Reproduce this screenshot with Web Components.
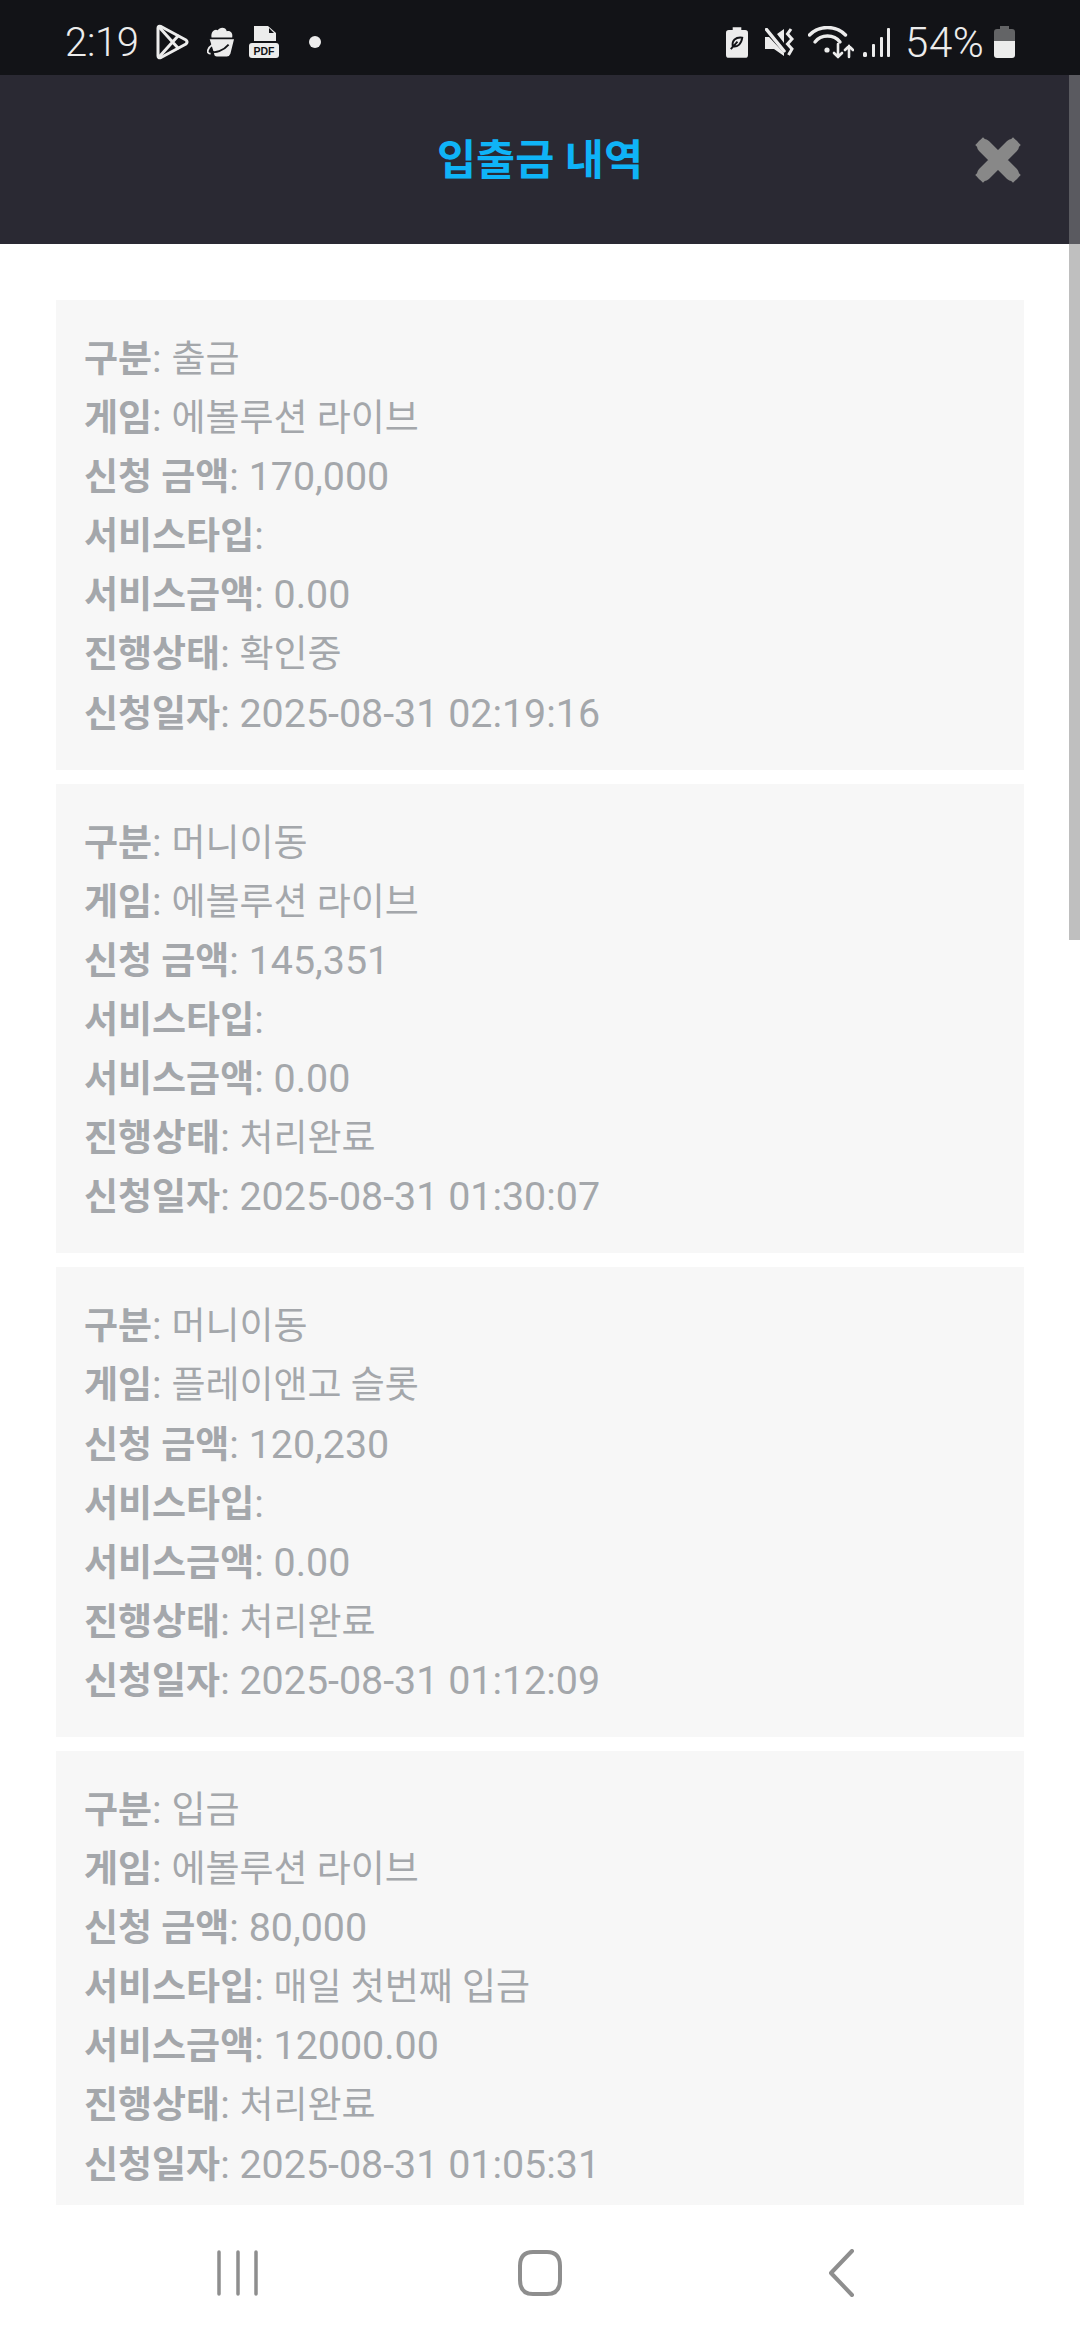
<!DOCTYPE html>
<html lang="ko">
<head>
<meta charset="utf-8">
<title>입출금 내역</title>
<style>
  html, body { margin: 0; padding: 0; background: #fff; }
  body { font-family: Roboto, "Noto Sans CJK KR", sans-serif; }
</style>
</head>
<body>
<app-shell>
  <status-bar slot="top" time="2:19" level="54%"></status-bar>
  <app-header slot="top" heading="입출금 내역"></app-header>

  <record-card>
    <record-row label="구분" ko>출금</record-row>
    <record-row label="게임" ko>에볼루션 라이브</record-row>
    <record-row label="신청 금액">170,000</record-row>
    <record-row label="서비스타입"></record-row>
    <record-row label="서비스금액">0.00</record-row>
    <record-row label="진행상태" ko>확인중</record-row>
    <record-row label="신청일자">2025-08-31 02:19:16</record-row>
  </record-card>
  <record-card>
    <record-row label="구분" ko>머니이동</record-row>
    <record-row label="게임" ko>에볼루션 라이브</record-row>
    <record-row label="신청 금액">145,351</record-row>
    <record-row label="서비스타입"></record-row>
    <record-row label="서비스금액">0.00</record-row>
    <record-row label="진행상태" ko>처리완료</record-row>
    <record-row label="신청일자">2025-08-31 01:30:07</record-row>
  </record-card>
  <record-card>
    <record-row label="구분" ko>머니이동</record-row>
    <record-row label="게임" ko>플레이앤고 슬롯</record-row>
    <record-row label="신청 금액">120,230</record-row>
    <record-row label="서비스타입"></record-row>
    <record-row label="서비스금액">0.00</record-row>
    <record-row label="진행상태" ko>처리완료</record-row>
    <record-row label="신청일자">2025-08-31 01:12:09</record-row>
  </record-card>
  <record-card>
    <record-row label="구분" ko>입금</record-row>
    <record-row label="게임" ko>에볼루션 라이브</record-row>
    <record-row label="신청 금액">80,000</record-row>
    <record-row label="서비스타입" ko>매일 첫번째 입금</record-row>
    <record-row label="서비스금액">12000.00</record-row>
    <record-row label="진행상태" ko>처리완료</record-row>
    <record-row label="신청일자">2025-08-31 01:05:31</record-row>
  </record-card>

  <nav-bar slot="bottom"></nav-bar>
</app-shell>

<script>
class AppShell extends HTMLElement {
  constructor() {
    super();
    this.attachShadow({ mode: "open" });
  }
  connectedCallback() {
    this.shadowRoot.innerHTML = `
      <style>
        :host { display: flex; flex-direction: column; position: relative; width: 1080px; height: 2340px; overflow: hidden; background: #fff; }
        .list { flex: 1; min-height: 0; overflow: hidden; display: flex; flex-direction: column; gap: 14px; padding: 56px 56px 0; }
        .thumb { position: absolute; top: 75px; right: 0; width: 11px; height: 865px; background: #bfbfbf; }
        .thumb::before { content: ""; display: block; height: 169px; background: #5a5a60; }
      </style>
      <slot name="top"></slot>
      <div class="list"><slot></slot></div>
      <slot name="bottom"></slot>
      <div class="thumb"></div>
    `;
  }
}

class StatusBar extends HTMLElement {
  constructor() {
    super();
    this.attachShadow({ mode: "open" });
  }
  connectedCallback() {
    const time = this.getAttribute("time");
    const level = this.getAttribute("level");
    this.shadowRoot.innerHTML = `
      <style>
        :host { display: flex; align-items: center; justify-content: space-between; height: 75px; padding: 9px 65px 0 65px; box-sizing: border-box; background: #121317; color: #ececec; font-family: Roboto, sans-serif; }
        .side { display: flex; align-items: center; }
        .time { width: 73px; font-size: 40px; font-weight: 300; letter-spacing: -0.3px; margin-right: 18px; white-space: nowrap; }
        .level { width: 80px; font-size: 42px; font-weight: 300; letter-spacing: 0.6px; margin: 0 9px 0 15px; white-space: nowrap; }
        svg { display: block; flex: none; }
      </style>
      <div class="side">
        <span class="time">${time}</span>
        <svg width="33" height="36" viewBox="0 0 33 36" fill="none" stroke="#ececec" stroke-width="3" stroke-linejoin="round" stroke-linecap="round">
          <path d="M2 4 Q2 1.5 5 2.5 L30 16 Q32 18 30 20 L5 33.5 Q2 34.5 2 32 Z"/>
          <path d="M3 3 L22 24 M3 33 L22 12"/>
        </svg>
        <svg style="margin-left:18px" width="27" height="32" viewBox="0 0 30 32">
          <path d="M5 11 C4 4 9 1 12 3 C14 -1 21 -1 22 4 C26 3 29 6 28 11 Z" fill="#ececec"/>
          <path d="M3 13 H30 L26 29 Q25 32 22 32 H11 Q8 32 8 29 Z" fill="#ececec"/>
          <path d="M4 26 C9 29 18 26 24 19" fill="none" stroke="#121317" stroke-width="2"/>
          <path d="M6 19 C0 23 -1 29 4 29" fill="none" stroke="#ececec" stroke-width="2"/>
        </svg>
        <svg style="margin-left:15px" width="30" height="32" viewBox="0 0 30 32">
          <path d="M5 0 H19 L27 7 V15 H5 Z" fill="#ececec"/>
          <path d="M20 2 V7 H25 Z" fill="#121317"/>
          <rect x="0" y="17" width="30" height="15" rx="3" fill="#ececec"/>
          <text x="15" y="28.5" font-family="Liberation Sans, sans-serif" font-size="10.5" font-weight="700" text-anchor="middle" fill="#121317">PDF</text>
        </svg>
        <svg style="margin-left:30px" width="12" height="12" viewBox="0 0 12 12"><circle cx="6" cy="6" r="6" fill="#ececec"/></svg>
      </div>
      <div class="side">
        <svg width="22" height="31" viewBox="0 0 23 32">
          <path d="M7 0 H16 V3 H20 Q23 3 23 6 V29 Q23 32 20 32 H3 Q0 32 0 29 V6 Q0 3 3 3 H7 Z" fill="#ececec"/>
          <path d="M17 11 C10 10 6 14 7 20 C12 21 16 18 17 11 Z M5 23 L12 15" fill="none" stroke="#121317" stroke-width="2"/>
        </svg>
        <svg style="margin-left:17px" width="30" height="29" viewBox="0 0 30 29">
          <path d="M12 6 L19 1 V15 Z M0 9 H4 L19 25 V28 L9 21 H0 Z" fill="#ececec"/>
          <path d="M1.5 1.5 L19 23" stroke="#ececec" stroke-width="3.5" stroke-linecap="round"/>
          <path d="M26 1 L22.5 6 L27 11 L22.5 16 L27 21 L23.5 27" fill="none" stroke="#ececec" stroke-width="3"/>
        </svg>
        <svg style="margin-left:13px" width="46" height="33" viewBox="0 0 46 33" fill="none" stroke="#ececec" stroke-linecap="round">
          <path d="M1.5 9 C11 -1 28 -1 37.5 9" stroke-width="3.4"/>
          <path d="M7 16 C13 8 26 8 32 16" stroke-width="3.4"/>
          <circle cx="19" cy="24" r="2.6" fill="#ececec" stroke="none"/>
          <path d="M30 18 V31 M26 27 L30 31 L34 27" stroke-width="2.6"/>
          <path d="M41 31 V20 M37 24 L41 20 L45 24" stroke-width="2.6"/>
        </svg>
        <svg style="margin-left:9px" width="27" height="29" viewBox="0 0 27 29" fill="#ececec">
          <rect x="0" y="24" width="4" height="5" rx="1.5"/>
          <rect x="9" y="16" width="3" height="13" rx="1"/>
          <rect x="17" y="9" width="3" height="20" rx="1"/>
          <rect x="24" y="0" width="3" height="29" rx="1"/>
        </svg>
        <span class="level">${level}</span>
        <svg width="21" height="32" viewBox="0 0 21 32">
          <path d="M6 0 H15 V3 H18 Q21 3 21 6 V15 H0 V6 Q0 3 3 3 H6 Z" fill="#636466"/>
          <path d="M0 15 H21 V29 Q21 32 18 32 H3 Q0 32 0 29 Z" fill="#ececec"/>
        </svg>
      </div>
    `;
  }
}

class AppHeader extends HTMLElement {
  constructor() {
    super();
    this.attachShadow({ mode: "open" });
  }
  connectedCallback() {
    this.shadowRoot.innerHTML = `
      <style>
        :host { display: grid; grid-template-columns: 1fr auto 1fr; align-items: center; height: 169px; background: #2a2933; font-family: Roboto, "Noto Sans CJK KR", sans-serif; }
        h1 { grid-column: 2; margin: -7px 0 0; font-size: 42.5px; font-weight: 700; color: #0fb3f7; }
        svg { justify-self: end; margin-right: 59px; display: block; }
      </style>
      <h1>${this.getAttribute("heading")}</h1>
      <svg width="46" height="46" viewBox="0 0 46 46" fill="none" stroke="#888" stroke-width="14" stroke-linecap="round">
        <path d="M8 8 L38 38 M38 8 L8 38" stroke-linecap="square" stroke-width="11"/>
        <path d="M9 9 L37 37 M37 9 L9 37" stroke-width="14"/>
      </svg>
    `;
  }
}

class RecordCard extends HTMLElement {
  constructor() {
    super();
    this.attachShadow({ mode: "open" });
    this.shadowRoot.innerHTML = `
      <style>
        :host { display: block; flex: none; padding: 29px 28px 27px; background: #f7f7f7; }
      </style>
      <slot></slot>
    `;
  }
}

class RecordRow extends HTMLElement {
  constructor() {
    super();
    this.attachShadow({ mode: "open" });
  }
  connectedCallback() {
    this.shadowRoot.innerHTML = `
      <style>
        :host { display: block; height: 59.1px; line-height: 59.1px; font-family: Roboto, "Noto Sans CJK KR", sans-serif; font-size: 39.4px; color: #a4a7ab; white-space: nowrap; }
        :host([ko]) .val { font-size: 37px; }
        b { font-size: 37px; font-weight: 700; }
      </style>
      <b>${this.getAttribute("label")}</b>: <span class="val"><slot></slot></span>
    `;
  }
}

class NavBar extends HTMLElement {
  constructor() {
    super();
    this.attachShadow({ mode: "open" });
    this.shadowRoot.innerHTML = `
      <style>
        :host { display: flex; justify-content: center; align-items: center; gap: 254px; height: 135px; background: #fff; }
        svg { display: block; }
      </style>
      <svg width="48" height="48" viewBox="0 0 48 48" fill="none" stroke="#8e8e8e" stroke-width="3.5" stroke-linecap="round">
        <path d="M5 3 V45 M24 3 V45 M42 3 V45"/>
      </svg>
      <svg width="48" height="48" viewBox="0 0 48 48" fill="none" stroke="#8e8e8e" stroke-width="4">
        <path d="M17 3 H31 C40 3 44 8 44 17 V31 C44 40 40 45 31 45 H17 C8 45 4 40 4 31 V17 C4 8 8 3 17 3 Z"/>
      </svg>
      <svg width="48" height="48" viewBox="0 0 48 48" fill="none" stroke="#8e8e8e" stroke-width="4" stroke-linecap="round" stroke-linejoin="round">
        <path d="M34 2 L13 24 L34 46"/>
      </svg>
    `;
  }
}

customElements.define("app-shell", AppShell);
customElements.define("status-bar", StatusBar);
customElements.define("app-header", AppHeader);
customElements.define("record-card", RecordCard);
customElements.define("record-row", RecordRow);
customElements.define("nav-bar", NavBar);
</script>
</body>
</html>
